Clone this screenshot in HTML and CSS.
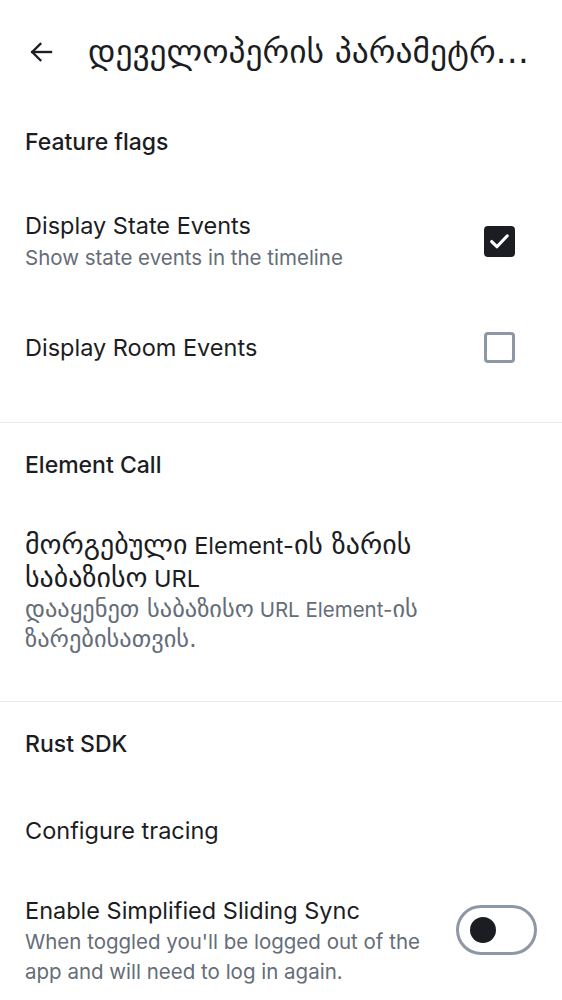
FILE: index.html
```html
<!DOCTYPE html>
<html lang="ka">
<head>
<meta charset="utf-8">
<title>Developer settings</title>
<link rel="stylesheet" href="styles.css">
</head>
<body>
<div class="screen">
  <header class="topbar">
    <button class="back" aria-label="Back">
      <svg width="30" height="30" viewBox="0 0 24 24" fill="none" stroke="#1b1d22" stroke-width="1.9" stroke-linecap="square">
        <path d="M20 12H5"/>
        <path d="M11.5 5.5L5 12l6.5 6.5"/>
      </svg>
    </button>
    <h1 class="title">დეველოპერის პარამეტრები</h1>
  </header>

  <section class="section section-first">
    <h2 class="section-head">Feature flags</h2>
    <div class="item">
      <div class="item-text">
        <div class="item-title">Display State Events</div>
        <div class="item-sub">Show state events in the timeline</div>
      </div>
      <span class="checkbox checked">
        <svg width="26" height="26" viewBox="0 0 24 24" fill="none" stroke="#fff" stroke-width="3" stroke-linecap="round" stroke-linejoin="round"><path d="M4.5 12.5l5 5L19.5 7"/></svg>
      </span>
    </div>
    <div class="item">
      <div class="item-text">
        <div class="item-title">Display Room Events</div>
      </div>
      <span class="checkbox"></span>
    </div>
  </section>

  <section class="section section-call">
    <h2 class="section-head">Element Call</h2>
    <div class="item item-call">
      <div class="item-text">
        <div class="item-title"><span class="ka">მორგებული</span> Element-<span class="ka">ის ზარის საბაზისო</span> URL</div>
        <div class="item-sub"><span class="ka">დააყენეთ საბაზისო</span> URL Element-<span class="ka">ის ზარებისათვის.</span></div>
      </div>
    </div>
  </section>

  <section class="section section-rust">
    <h2 class="section-head">Rust SDK</h2>
    <div class="item item-tracing">
      <div class="item-text">
        <div class="item-title">Configure tracing</div>
      </div>
    </div>
    <div class="item item-sync">
      <div class="item-text">
        <div class="item-title">Enable Simplified Sliding Sync</div>
        <div class="item-sub">When toggled you'll be logged out of the app and will need to log in again.</div>
      </div>
      <span class="switch"><span class="knob"></span></span>
    </div>
  </section>
</div>
</body>
</html>
```

FILE: styles.css
```css
* { box-sizing: border-box; }

html, body {
  margin: 0;
  padding: 0;
  background: #ffffff;
}

body {
  font-family: Inter, "DejaVu Sans", "Noto Sans", sans-serif;
  color: #1b1d22;
}

.screen {
  width: 562px;
  overflow: hidden;
}

.topbar {
  height: 100px;
  display: flex;
  align-items: center;
  padding: 4px 20px 0 26px;
  gap: 32px;
}

.back {
  border: 0;
  background: none;
  padding: 0;
  width: 30px;
  height: 30px;
  display: flex;
  align-items: center;
  justify-content: center;
}

.title {
  margin: 0;
  font-family: "DejaVu Sans", sans-serif;
  font-size: 33.5px;
  font-weight: 400;
  line-height: 44px;
  white-space: nowrap;
  overflow: hidden;
  text-overflow: ellipsis;
  flex: 1;
  min-width: 0;
}

.ka {
  font-family: "DejaVu Sans", sans-serif;
  font-size: 1.19em;
  line-height: 1;
}

.section {
  border-bottom: 1px solid #e9ebef;
}

.section-first { padding-bottom: 29px; }
.section-call { padding-bottom: 17px; }

.section-head {
  margin: 0;
  padding: 28px 25px 24px;
  font-size: 23px;
  font-weight: 500;
  line-height: 28px;
}

.item {
  display: flex;
  align-items: center;
  padding: 29px 25px;
  gap: 24px;
}

.item-text {
  flex: 1;
  min-width: 0;
}

.item-title {
  font-size: 23.5px;
  line-height: 33px;
}

.item-sub {
  margin-top: 1px;
  font-size: 20.5px;
  line-height: 30px;
  color: #656d77;
}

.item-call {
  padding-top: 26px;
}

.item-call .item-sub {
  margin-top: 0;
}

.checkbox {
  width: 31px;
  height: 31px;
  border: 3px solid #8d97a5;
  border-radius: 4px;
  margin-right: 22px;
  flex: none;
  display: flex;
  align-items: center;
  justify-content: center;
}

.checkbox.checked {
  background: #1b1d22;
  border-color: #1b1d22;
}

.item-tracing {
  padding: 32px 25px 24px;
}

.item-sync {
  padding: 23px 25px 30px;
  align-items: flex-start;
}

.item-sync .item-sub {
  margin-top: 0;
}

.switch {
  flex: none;
  width: 81px;
  height: 50px;
  border: 3px solid #8d97a5;
  border-radius: 25px;
  margin-top: 11px;
  display: flex;
  align-items: center;
  padding-left: 11px;
}

.knob {
  width: 26px;
  height: 26px;
  border-radius: 50%;
  background: #1b1d22;
}
```
